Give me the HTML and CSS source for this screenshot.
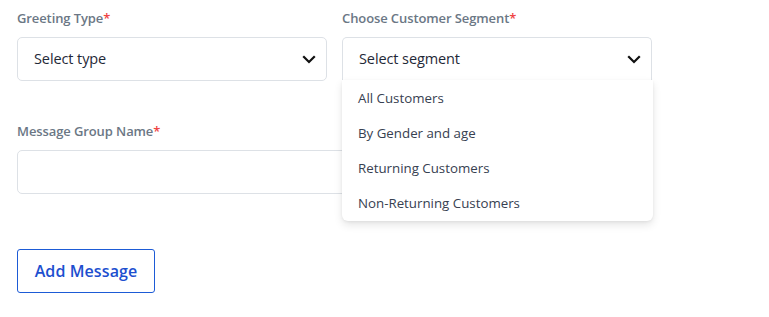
FILE: index.html
```html
<!DOCTYPE html>
<html lang="en">
<head>
<meta charset="utf-8">
<title>Message Group</title>
<link rel="stylesheet" href="styles.css">
</head>
<body>
<form class="form">
  <div class="grid">
    <div class="field">
      <label class="label">Greeting Type<span class="req">*</span></label>
      <div class="select">
        <span class="select-text">Select type</span>
        <svg class="chev" width="14" height="9" viewBox="0 0 14 9"><path d="M2 2 L7 7 L12 2" fill="none" stroke="#111" stroke-width="2.2" stroke-linecap="square"/></svg>
      </div>
    </div>
    <div class="field">
      <label class="label">Choose Customer Segment<span class="req">*</span></label>
      <div class="select-wrap">
        <div class="select open">
          <span class="select-text">Select segment</span>
          <svg class="chev" width="14" height="9" viewBox="0 0 14 9"><path d="M2 2 L7 7 L12 2" fill="none" stroke="#111" stroke-width="2.2" stroke-linecap="square"/></svg>
        </div>
        <ul class="menu">
          <li class="item">All Customers</li>
          <li class="item">By Gender and age</li>
          <li class="item">Returning Customers</li>
          <li class="item">Non-Returning Customers</li>
        </ul>
      </div>
    </div>
  </div>
  <div class="field field-full">
    <label class="label">Message Group Name<span class="req">*</span></label>
    <div class="input"></div>
  </div>
  <button type="button" class="btn">Add Message</button>
</form>
</body>
</html>
```
FILE: styles.css
```css
* { box-sizing: border-box; }
html, body { margin: 0; background: #fff; }
body {
  font-family: "Open Sans", "Noto Sans", "Liberation Sans", sans-serif;
  color: #1f2937;
}
.form {
  padding: 8px 0 0 17px;
  width: 652px;
}
.grid {
  display: grid;
  grid-template-columns: 310px 310px;
  column-gap: 15px;
}
.field { display: flex; flex-direction: column; }
.label {
  font-size: 13px;
  line-height: 20px;
  font-weight: 600;
  color: #6b7785;
  margin-bottom: 9px;
  letter-spacing: -0.1px;
}
.req { color: #ef4444; }
.select-wrap { position: relative; }
.select {
  height: 44px;
  border: 1px solid #dde1e6;
  border-radius: 5px;
  display: flex;
  align-items: center;
  justify-content: space-between;
  padding: 0 10px 0 16px;
  background: #fff;
}
.select.open { border-bottom-left-radius: 0; border-bottom-right-radius: 0; border-bottom-color: #f1f2f4; }
.select-text { font-size: 14.5px; color: #1f2937; letter-spacing: -0.1px; margin-top: -2px; }
.chev { display: block; margin-top: 1px; }
.menu {
  position: absolute;
  top: 43px;
  left: 0;
  right: -1px;
  margin: 0;
  padding: 1px 0 0;
  list-style: none;
  background: #fff;
  border-radius: 0 0 6px 6px;
  box-shadow: 0 4px 8px rgba(0,0,0,0.10), 0 1px 3px rgba(0,0,0,0.06);
  z-index: 5;
}
.item {
  height: 35px;
  line-height: 35px;
  padding-left: 16px;
  font-size: 13.3px;
  color: #374151;
}
.field-full { margin-top: 40px; }
.input {
  height: 44px;
  width: 635px;
  border: 1px solid #dde1e6;
  border-radius: 5px;
}
.btn {
  margin-top: 55px;
  height: 44px;
  width: 138px;
  border: 1px solid #1d5bd6;
  border-radius: 3px;
  background: #fff;
  color: #1d4fcf;
  font-family: inherit;
  font-size: 16px;
  font-weight: 600;
  letter-spacing: 0.1px;
  padding: 0;
}
```
